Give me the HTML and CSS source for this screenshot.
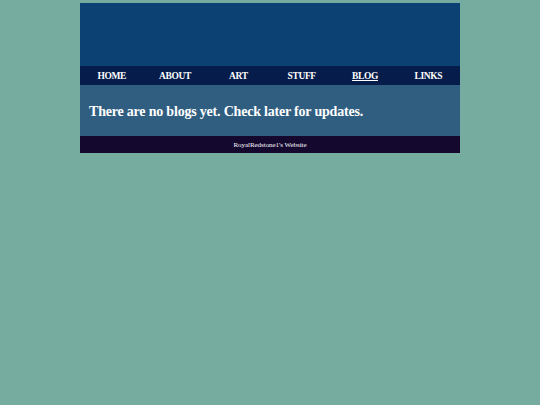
FILE: index.html
```html
<!DOCTYPE html>
<html>
<head>
<meta charset="utf-8">
<link rel="stylesheet" href="styles.css">
</head>
<body>
<div class="page">
  <header class="banner"></header>
  <nav class="nav">
    <a href="#">HOME</a>
    <a href="#">ABOUT</a>
    <a href="#">ART</a>
    <a href="#">STUFF</a>
    <a href="#" class="current">BLOG</a>
    <a href="#">LINKS</a>
  </nav>
  <main class="content">
    <h1>There are no blogs yet. Check later for updates.</h1>
  </main>
  <footer class="footer">RoyalRedstone1's Website</footer>
</div>
</body>
</html>
```
FILE: styles.css
```css
html, body {
  margin: 0;
  padding: 0;
  background: #76aba0;
  font-family: "Liberation Serif", "Times New Roman", serif;
}
.page {
  width: 380px;
  margin: 3px auto 0;
  display: flex;
  flex-direction: column;
}
.banner {
  height: 63px;
  background: #0c4174;
}
.nav {
  height: 19px;
  background: #061c4a;
  display: grid;
  grid-template-columns: repeat(6, 1fr);
  align-items: center;
}
.nav a {
  color: #ffffff;
  text-decoration: none;
  font-weight: bold;
  font-size: 9.5px;
  letter-spacing: -0.4px;
  text-align: center;
}
.nav a.current {
  text-decoration: underline;
}
.content {
  height: 51px;
  background: #305e80;
  padding: 2px 9px 0;
  box-sizing: border-box;
  display: flex;
  align-items: center;
}
.content h1 {
  margin: 0;
  color: #ffffff;
  font-size: 14px;
  letter-spacing: -0.2px;
  font-weight: bold;
}
.footer {
  height: 17px;
  background: #14082f;
  color: #ffffff;
  font-size: 7px;
  letter-spacing: -0.05px;
  display: flex;
  align-items: center;
  justify-content: center;
}
```
